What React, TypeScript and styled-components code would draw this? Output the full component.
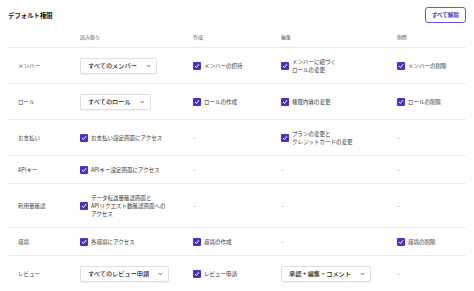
import React from 'react'
import styled, { createGlobalStyle } from 'styled-components'

const GlobalStyle = createGlobalStyle`
  html, body {
    margin : 0;
    background : #fff;
  }
  body {
    font-family : "Noto Sans CJK JP", "Noto Sans", sans-serif;
    color : #333;
  }
`;

const Page = styled.div`
  padding : 7px 8px 0;
  box-sizing : border-box;
  width : 474px;
`;

const TitleBar = styled.div`
  display : flex;
  justify-content : space-between;
  align-items : center;
  height : 16px;
`;

const Title = styled.h2`
  margin : 0;
  font-size : 6.4px;
  font-weight : 700;
  color : #222;
`;

const ClearButton = styled.button`
  height : 16px;
  padding : 0 6px;
  border : 1px solid #6a55d8;
  border-radius : 3px;
  background : #fff;
  color : #4a32c8;
  font-family : inherit;
  font-size : 5.6px;
  font-weight : 700;
`;

const Row = styled.div<{ head?: boolean }>`
  display : grid;
  grid-template-columns : 72px 113px 88px 116px 1fr;
  border-bottom : 1px solid #ececec;
  padding : ${p => p.head ? '10px 0 6px' : '9.5px 0'};
  line-height : 8px;
  font-size : ${p => p.head ? '5px' : '5.5px'};
  color : ${p => p.head ? '#555' : '#333'};
`;

const Cell = styled.div<{ first?: boolean }>`
  display : flex;
  align-items : center;
  padding-left : ${p => p.first ? '10px' : '0'};
  color : ${p => p.first ? '#444' : 'inherit'};
`;

const Dash = styled.span`
  color : #888;
`;

const Check = styled.span`
  display : flex;
  align-items : center;
  justify-content : center;
  flex : 0 0 8px;
  width : 8px;
  height : 8px;
  border-radius : 1px;
  background : #4a30c9;
  margin-right : 3px;
`;

const CheckItem = styled.div`
  display : flex;
  align-items : center;
`;

const Select = styled.div`
  display : inline-flex;
  align-items : center;
  justify-content : space-between;
  gap : 9px;
  height : 16px;
  padding : 0 5px 0 7px;
  box-sizing : border-box;
  border : 1px solid #dedede;
  border-radius : 2px;
  box-shadow : 0 1px 1px rgba(0,0,0,0.05);
  font-size : 6.2px;
  font-weight : 500;
  color : #1f1f1f;
  background : #fff;
  white-space : nowrap;
`;

type Val = null | { check: string[] } | { select: string };

interface Perm {
  label : string
  cells : Val[]
}

const data: Perm[] = [
  { label: 'メンバー', cells: [{ select: 'すべてのメンバー' }, { check: ['メンバーの招待'] }, { check: ['メンバーに紐づく', 'ロールの変更'] }, { check: ['メンバーの削除'] }] },
  { label: 'ロール', cells: [{ select: 'すべてのロール' }, { check: ['ロールの作成'] }, { check: ['権限内容の変更'] }, { check: ['ロールの削除'] }] },
  { label: 'お支払い', cells: [{ check: ['お支払い設定画面にアクセス'] }, null, { check: ['プランの変更と', 'クレジットカードの変更'] }, null] },
  { label: 'APIキー', cells: [{ check: ['APIキー設定画面にアクセス'] }, null, null, null] },
  { label: '利用量確認', cells: [{ check: ['データ転送量確認画面と', 'APIリクエスト数確認画面への', 'アクセス'] }, null, null, null] },
  { label: '環境', cells: [{ check: ['各環境にアクセス'] }, { check: ['環境の作成'] }, null, { check: ['環境の削除'] }] },
  { label: 'レビュー', cells: [{ select: 'すべてのレビュー申請' }, { check: ['レビュー申請'] }, { select: '承認 + 編集・コメント' }, null] },
];

function Tick() {
  return (
    <svg width="6" height="6" viewBox="0 0 12 12">
      <path d="M2.5 6.5 L5 9 L9.5 3" fill="none" stroke="#fff" strokeWidth="2" strokeLinecap="round" strokeLinejoin="round" />
    </svg>
  )
}

function Chevron() {
  return (
    <svg width="5" height="4" viewBox="0 0 10 8">
      <path d="M2 2.5 L5 5.5 L8 2.5" fill="none" stroke="#444" strokeWidth="1.6" strokeLinecap="round" strokeLinejoin="round" />
    </svg>
  )
}

function Value({ v }: { v: Val }) {
  if (!v) return <Dash>–</Dash>
  if ('select' in v) {
    return (
      <Select>
        <span>{v.select}</span>
        <Chevron />
      </Select>
    )
  }
  return (
    <CheckItem>
      <Check><Tick /></Check>
      <div>
        {v.check.map((t, i) => <div key={i}>{t}</div>)}
      </div>
    </CheckItem>
  )
}

export default function App() {
  return (
    <Page>
      <GlobalStyle />
      <TitleBar>
        <Title>デフォルト権限</Title>
        <ClearButton>すべて解除</ClearButton>
      </TitleBar>

      <Row head>
        <Cell first></Cell>
        <Cell>読み取り</Cell>
        <Cell>作成</Cell>
        <Cell>編集</Cell>
        <Cell>削除</Cell>
      </Row>

      {
        data.map((r, i) =>
          <Row key={i}>
            <Cell first>{r.label}</Cell>
            {r.cells.map((c, j) => <Cell key={j}><Value v={c} /></Cell>)}
          </Row>
        )
      }
    </Page>
  )
}
